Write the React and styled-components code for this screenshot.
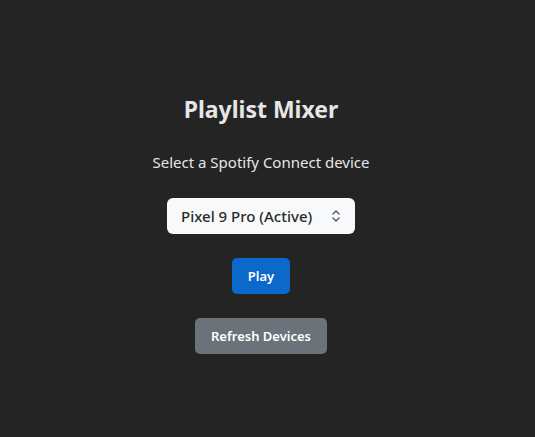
import styled, { createGlobalStyle } from "styled-components";

const GlobalStyle = createGlobalStyle`
    html, body {
        margin: 0;
        padding: 0;
        background: #242424;
    }
    body {
        font-family: "Noto Sans", "Open Sans", sans-serif;
        color: #e8e8e8;
    }
`;

const Page = styled.div`
    width: 522px;
    height: 437px;
    display: flex;
    flex-direction: column;
    align-items: center;
    padding-top: 93px;
    box-sizing: border-box;
`;

const Title = styled.h1`
    margin: 0;
    font-size: 23px;
    font-weight: 700;
    line-height: 32px;
    color: #e6e6e6;
`;

const Subtitle = styled.p`
    margin: 26px 0 0;
    font-size: 15px;
    line-height: 22px;
    color: #e6e6e6;
`;

const SelectBox = styled.div`
    margin-top: 25px;
    width: 188px;
    height: 36px;
    box-sizing: border-box;
    display: flex;
    align-items: center;
    justify-content: space-between;
    padding: 0 14px;
    background: #f8f9fb;
    border-radius: 6px;
    color: #2a2a2a;
    font-size: 15px;
    font-weight: 500;
`;

const Button = styled.button`
    font-family: inherit;
    font-size: 13px;
    font-weight: 600;
    color: #fff;
    border: none;
    border-radius: 5px;
    height: 36px;
    padding: 0 ${p => p.$pad}px;
    background: ${p => p.$bg};
    margin-top: ${p => p.$top}px;
`;

const Chevrons = () => (
    <svg width="10" height="16" viewBox="0 0 10 16" fill="none" stroke="#555" strokeWidth="1.4" strokeLinecap="round" strokeLinejoin="round">
        <path d="M2 6 L5 3 L8 6" />
        <path d="M2 10 L5 13 L8 10" />
    </svg>
);

const App = () => (
    <>
        <GlobalStyle />
        <Page>
            <Title>Playlist Mixer</Title>
            <Subtitle>Select a Spotify Connect device</Subtitle>
            <SelectBox>
                <span>Pixel 9 Pro (Active)</span>
                <Chevrons />
            </SelectBox>
            <Button $bg="#0b69cc" $pad={15.5} $top={24}>Play</Button>
            <Button $bg="#6b727a" $pad={15.5} $top={24}>Refresh Devices</Button>
        </Page>
    </>
);

export default App;
